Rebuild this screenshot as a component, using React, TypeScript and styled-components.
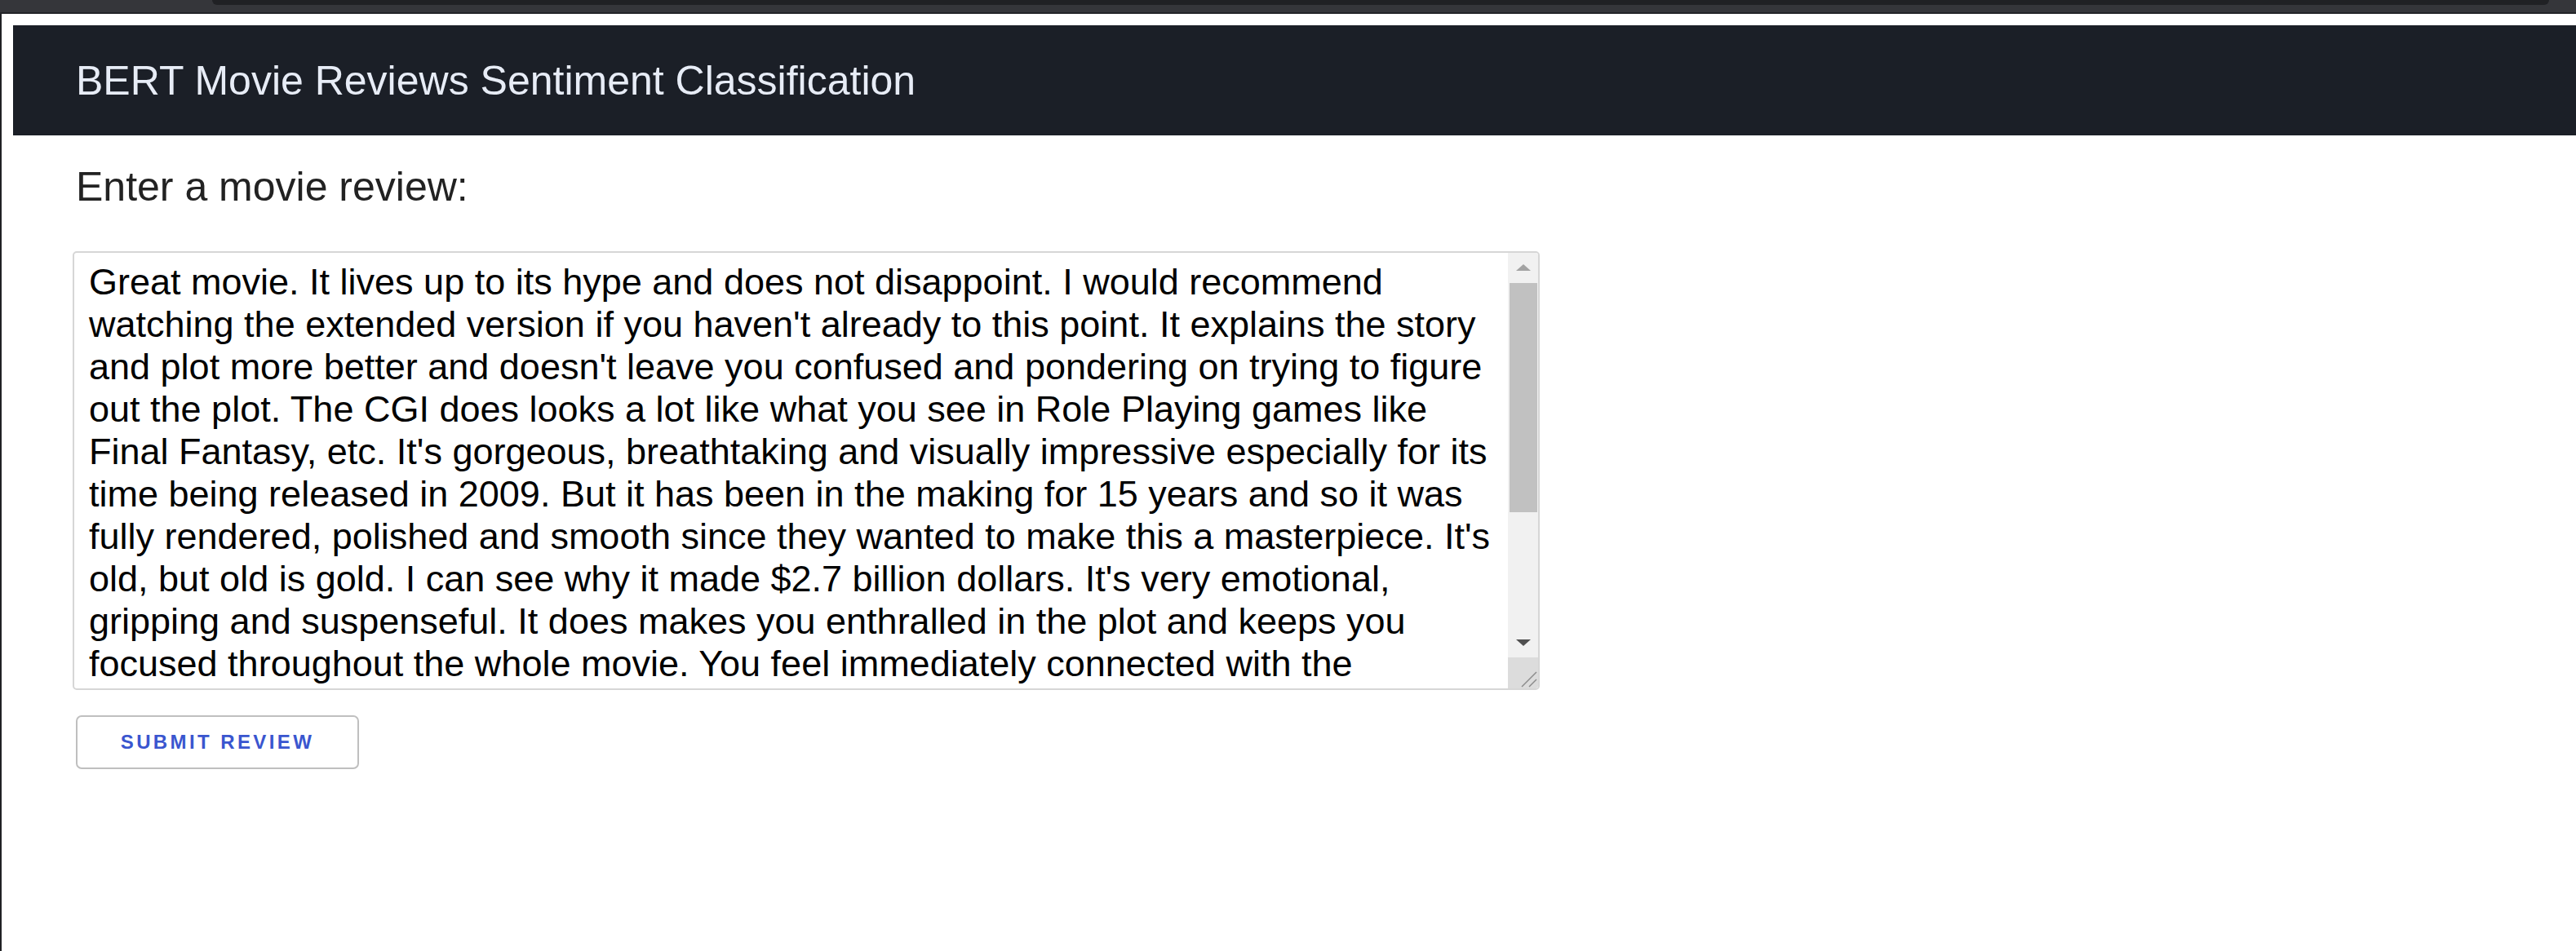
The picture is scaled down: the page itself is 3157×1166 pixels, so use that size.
import styled, { createGlobalStyle } from 'styled-components'

const GlobalStyle = createGlobalStyle`
  html, body {
    margin: 0;
    padding: 0;
    background: #ffffff;
    overflow: hidden;
  }
`

const review =
  "Great movie. It lives up to its hype and does not disappoint. I would recommend watching the extended version if you haven't already to this point. It explains the story and plot more better and doesn't leave you confused and pondering on trying to figure out the plot. The CGI does looks a lot like what you see in Role Playing games like Final Fantasy, etc. It's gorgeous, breathtaking and visually impressive especially for its time being released in 2009. But it has been in the making for 15 years and so it was fully rendered, polished and smooth since they wanted to make this a masterpiece. It's old, but old is gold. I can see why it made $2.7 billion dollars. It's very emotional, gripping and suspenseful. It does makes you enthralled in the plot and keeps you focused throughout the whole movie. You feel immediately connected with the"

const Window = styled.div`
  display: flex;
  flex-direction: column;
  height: 100vh;
  font-family: 'Liberation Sans', Arial, sans-serif;
`

const ChromeBar = styled.div`
  height: 15px;
  background: #35363a;
  border-bottom: 2px solid #232427;
  display: flex;
`

const ChromeTab = styled.div`
  flex: 1;
  height: 6px;
  margin: 0 33px 0 260px;
  background: #202124;
  border-radius: 0 0 16px 16px;
`

const Viewport = styled.div`
  flex: 1;
  border-left: 2px solid #202124;
  padding: 14px 0 0 14px;
  background: #ffffff;
`

const Header = styled.header`
  height: 135px;
  display: flex;
  align-items: center;
  padding-left: 77px;
  background: #1b1f27;
`

const Title = styled.h1`
  margin: 0;
  font-size: 50px;
  font-weight: 400;
  color: #e7ecf6;
`

const Main = styled.main`
  display: flex;
  flex-direction: column;
  align-items: flex-start;
  padding-left: 73px;
`

const Label = styled.h2`
  margin: 33px 0 49px 4px;
  font-size: 50px;
  line-height: 60px;
  font-weight: 400;
  color: #222222;
`

const ReviewBox = styled.div`
  width: 1798px;
  height: 538px;
  box-sizing: border-box;
  display: flex;
  border: 2px solid #d6d6d6;
  border-radius: 5px;
  overflow: hidden;
  background: #ffffff;
`

const ReviewInput = styled.textarea`
  flex: 1;
  margin: 0;
  padding: 10px 18px;
  border: none;
  outline: none;
  resize: none;
  overflow: hidden;
  font-family: 'Liberation Sans', Arial, sans-serif;
  font-size: 45px;
  line-height: 52px;
  color: #000000;
  background: transparent;
`

const ScrollRail = styled.div`
  width: 37px;
  display: flex;
  flex-direction: column;
  background: #f1f1f1;
`

const ArrowButton = styled.div<{ $dir: 'up' | 'down'; $muted?: boolean }>`
  height: 36px;
  display: flex;
  align-items: center;
  justify-content: center;

  &::before {
    content: '';
    width: 0;
    height: 0;
    border-left: 9px solid transparent;
    border-right: 9px solid transparent;
    ${(p) => (p.$dir === 'up' ? 'border-bottom' : 'border-top')}: 8px solid
      ${(p) => (p.$muted ? '#a3a3a3' : '#505050')};
  }
`

const Track = styled.div`
  flex: 1;
  display: flex;
  flex-direction: column;
  align-items: center;
`

const Thumb = styled.div`
  width: 34px;
  height: 281px;
  margin-top: 1px;
  background: #c1c1c1;
`

const Resizer = styled.div`
  height: 38px;
  background: #dcdcdc;
  display: flex;
  justify-content: flex-end;
  align-items: flex-end;
`

const SubmitButton = styled.button`
  margin: 31px 0 0 4px;
  width: 347px;
  height: 66px;
  box-sizing: border-box;
  border: 2px solid #bfbfbf;
  border-radius: 7px;
  background: #ffffff;
  font-family: 'Liberation Sans', Arial, sans-serif;
  font-size: 24px;
  font-weight: 700;
  letter-spacing: 3.4px;
  text-transform: uppercase;
  color: #3a56cf;
  cursor: pointer;
`

const App = () => {
  return (
    <Window>
      <GlobalStyle />
      <ChromeBar>
        <ChromeTab />
      </ChromeBar>
      <Viewport>
        <Header>
          <Title>BERT Movie Reviews Sentiment Classification</Title>
        </Header>
        <Main>
          <Label>Enter a movie review:</Label>
          <ReviewBox>
            <ReviewInput defaultValue={review} spellCheck={false} />
            <ScrollRail>
              <ArrowButton $dir="up" $muted />
              <Track>
                <Thumb />
              </Track>
              <ArrowButton $dir="down" />
              <Resizer>
                <svg width="22" height="22" viewBox="0 0 22 22">
                  <line x1="2" y1="20" x2="20" y2="2" stroke="#8a8a8a" strokeWidth="1.4" />
                  <line x1="11" y1="20" x2="20" y2="11" stroke="#8a8a8a" strokeWidth="1.4" />
                </svg>
              </Resizer>
            </ScrollRail>
          </ReviewBox>
          <SubmitButton>Submit review</SubmitButton>
        </Main>
      </Viewport>
    </Window>
  )
}

export default App
